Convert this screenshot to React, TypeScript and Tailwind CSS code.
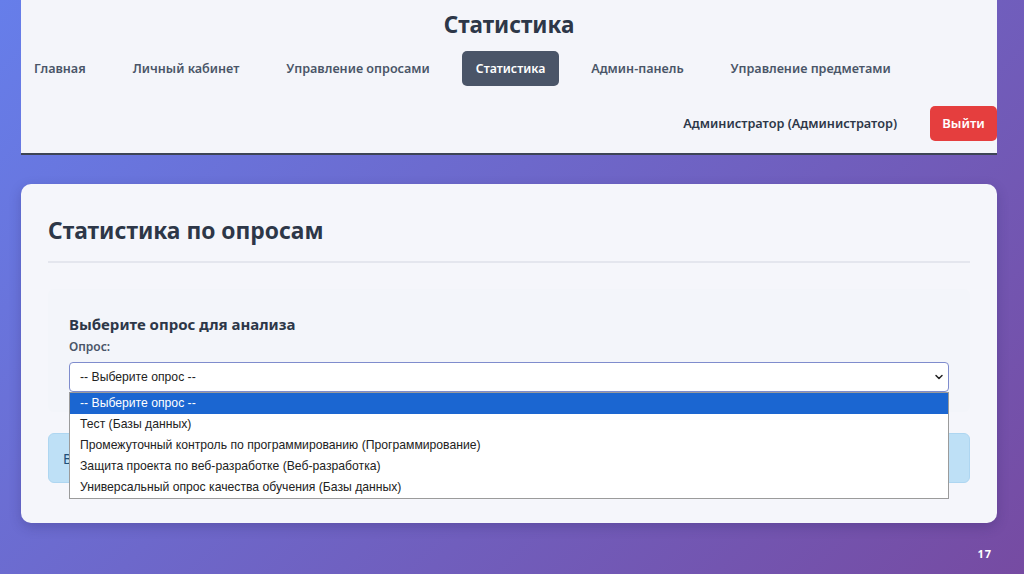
import { ChevronDown } from "lucide-react"

const navItems = [
  "Главная",
  "Личный кабинет",
  "Управление опросами",
  "Статистика",
  "Админ-панель",
  "Управление предметами",
]

const options = [
  "-- Выберите опрос --",
  "Тест (Базы данных)",
  "Промежуточный контроль по программированию (Программирование)",
  "Защита проекта по веб-разработке (Веб-разработка)",
  "Универсальный опрос качества обучения (Базы данных)",
]

export default function App() {
  return (
    <div
      className="relative h-[574px] w-[1024px] overflow-hidden bg-[linear-gradient(135deg,#667eea_0%,#764ba2_100%)] text-[#2d3748]"
      style={{ fontFamily: '"Noto Sans", "Open Sans", sans-serif' }}
    >
      <header className="ml-[21px] flex h-[155px] w-[976px] flex-col border-b-2 border-[#3d4455] bg-[#f4f5fa]">
        <h1 className="mt-[8px] text-center text-[22.5px] font-bold leading-[34px] text-[#2d3748]">
          Статистика
        </h1>
        <nav className="-ml-[2px] mt-[9px] flex items-center gap-[17px]">
          {navItems.map((item) => (
            <a
              key={item}
              className={
                item === "Статистика"
                  ? "rounded-[5px] bg-[#4a5568] px-[14px] py-[8px] text-[12.3px] font-semibold leading-[19px] text-white"
                  : "px-[15px] py-[8px] text-[12.6px] font-semibold leading-[19px] text-[#4a5568]"
              }
            >
              {item}
            </a>
          ))}
        </nav>
        <div className="mt-[20px] flex items-center justify-end gap-[33px]">
          <span className="text-[12.7px] font-semibold text-[#2d3748]">
            Администратор (Администратор)
          </span>
          <button className="h-[35px] w-[67px] rounded-[5px] bg-[#e53e3e] text-[13px] font-semibold text-white">
            Выйти
          </button>
        </div>
      </header>

      <main className="ml-[21px] mt-[29px] h-[339px] w-[976px] rounded-[10px] bg-[#f5f6fb] px-[27px] pt-[30px] shadow-[0_4px_12px_rgba(40,30,90,0.25)]">
        <h2 className="text-[22.8px] font-bold leading-[34px] text-[#2d3748]">Статистика по опросам</h2>
        <hr className="mt-[13px] border-t-2 border-[#e4e6ee]" />

        <section className="relative mt-[26px] rounded-[6px] bg-[#f3f5fa] px-[21px] pb-[20px] pt-[24px]">
          <h3 className="text-[15px] font-bold leading-[22px] text-[#2d3748]">
            Выберите опрос для анализа
          </h3>
          <label className="mt-[3px] block text-[12px] font-semibold leading-[18px] text-[#4a5568]">
            Опрос:
          </label>
          <div className="relative mt-[6px]">
            <div
              className="flex h-[30px] items-center justify-between rounded-[4px] border border-[#7f8ccd] bg-white pl-[10px] pr-[3px] text-[12.2px] text-[#222]"
              style={{ fontFamily: '"Liberation Sans", Arial, sans-serif' }}
            >
              <span>-- Выберите опрос --</span>
              <ChevronDown size={12} strokeWidth={3} className="text-[#222]" />
            </div>
            <ul
              className="absolute left-0 right-0 top-[30px] z-10 border border-[#9b9b9b] bg-white text-[12.2px] leading-[21px] text-[#222]"
              style={{ fontFamily: '"Liberation Sans", Arial, sans-serif' }}
            >
              {options.map((opt, i) => (
                <li
                  key={opt}
                  className={i === 0 ? "bg-[#1b66d1] px-[10px] text-white" : "px-[10px]"}
                >
                  {opt}
                </li>
              ))}
            </ul>
          </div>
        </section>

        <div className="mt-[21px] flex h-[50px] items-center rounded-[6px] border border-[#aed6f1] bg-[#bee0f6] px-[14px] text-[14px] text-[#1f4f7a]">
          Выберите опрос для просмотра статистики
        </div>
      </main>

      <div className="absolute bottom-[12px] right-[32px] text-[11px] font-bold tracking-[1px] text-white">
        17
      </div>
    </div>
  )
}
